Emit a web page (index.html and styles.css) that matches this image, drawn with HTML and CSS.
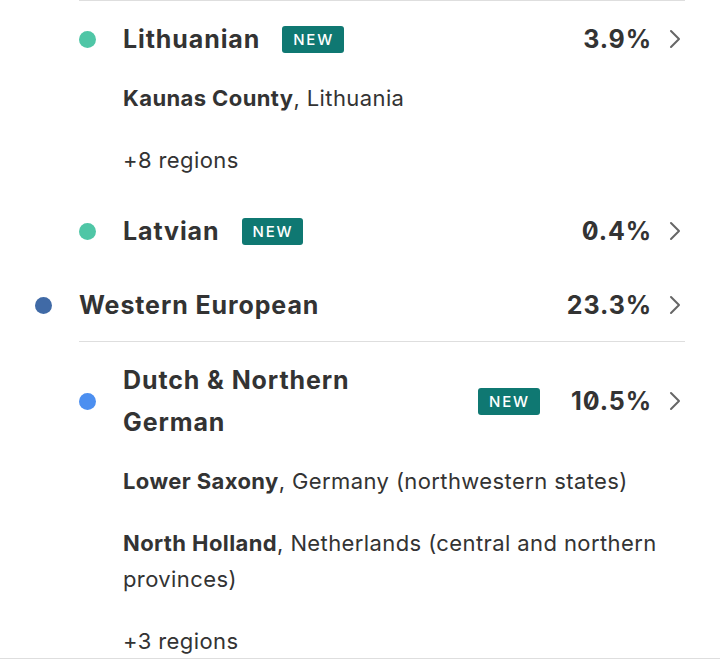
FILE: index.html
```html
<!DOCTYPE html>
<html lang="en">
<head>
<meta charset="utf-8">
<link rel="stylesheet" href="styles.css">
</head>
<body>
<div class="page">
  <ul class="list">
    <li class="row sub divided">
      <div class="head">
        <span class="dot dot-lt"></span>
        <div class="name-wrap">
          <span class="name">Lithuanian</span>
          <span class="badge">NEW</span>
        </div>
        <span class="pct">3.9%</span>
        <svg class="chev" viewBox="0 0 12 20" width="12" height="20"><path d="M2 2 L10 10 L2 18" fill="none" stroke="#666666" stroke-width="2" stroke-linecap="round" stroke-linejoin="round"/></svg>
      </div>
      <div class="regions">
        <p class="region"><b>Kaunas County</b>, Lithuania</p>
        <p class="region">+8 regions</p>
      </div>
    </li>
    <li class="row sub">
      <div class="head">
        <span class="dot dot-lt"></span>
        <div class="name-wrap">
          <span class="name">Latvian</span>
          <span class="badge">NEW</span>
        </div>
        <span class="pct">0.4%</span>
        <svg class="chev" viewBox="0 0 12 20" width="12" height="20"><path d="M2 2 L10 10 L2 18" fill="none" stroke="#666666" stroke-width="2" stroke-linecap="round" stroke-linejoin="round"/></svg>
      </div>
    </li>
    <li class="row top">
      <div class="head">
        <span class="dot dot-we"></span>
        <div class="name-wrap">
          <span class="name">Western European</span>
        </div>
        <span class="pct">23.3%</span>
        <svg class="chev" viewBox="0 0 12 20" width="12" height="20"><path d="M2 2 L10 10 L2 18" fill="none" stroke="#666666" stroke-width="2" stroke-linecap="round" stroke-linejoin="round"/></svg>
      </div>
    </li>
    <li class="row sub divided">
      <div class="head">
        <span class="dot dot-dn"></span>
        <div class="name-wrap">
          <span class="name">Dutch &amp; Northern German</span>
          <span class="badge">NEW</span>
        </div>
        <span class="pct">10.5%</span>
        <svg class="chev" viewBox="0 0 12 20" width="12" height="20"><path d="M2 2 L10 10 L2 18" fill="none" stroke="#666666" stroke-width="2" stroke-linecap="round" stroke-linejoin="round"/></svg>
      </div>
      <div class="regions">
        <p class="region"><b>Lower Saxony</b>, Germany (northwestern states)</p>
        <p class="region"><b>North Holland</b>, Netherlands (central and northern provinces)</p>
        <p class="region">+3 regions</p>
      </div>
    </li>
  </ul>
</div>
</body>
</html>
```
FILE: styles.css
```css
* { box-sizing: border-box; }
html, body { margin: 0; padding: 0; background: #fff; }
body {
  font-family: Inter, "Noto Sans", sans-serif;
  color: #333333;
}
.page {
  height: 659px;
  overflow: hidden;
  border-bottom: 1px solid #dedede;
}
.list {
  list-style: none;
  margin: 0;
  padding: 0 35px;
  width: 720px;
}
.row {
  padding: 17px 0 15px 0;
}
.row.sub { margin-left: 44px; }
.row.divided { border-top: 1px solid #dedede; }
.head {
  display: flex;
  align-items: center;
}
.dot {
  flex: none;
  width: 17px;
  height: 17px;
  border-radius: 50%;
  margin-right: 27px;
}
.dot-lt { background: #4fc6a6; }
.dot-we { background: #406aa6; }
.dot-dn { background: #4c8ff0; }
.name-wrap {
  flex: 1;
  min-width: 0;
  display: flex;
  align-items: center;
  gap: 22px;
  margin-right: 26px;
}
.name {
  flex: 0 1 auto;
  max-width: 333px;
  font-size: 25px;
  font-weight: 700;
  letter-spacing: 0.9px;
  line-height: 42px;
}
.badge {
  flex: none;
  background: #0f7872;
  color: #fff;
  font-size: 15px;
  font-weight: 500;
  letter-spacing: 1.8px;
  line-height: 27px;
  height: 27px;
  padding: 0 10px 0 11px;
  border-radius: 3px;
}
.pct {
  flex: none;
  font-size: 25px;
  font-weight: 700;
  letter-spacing: 0.9px;
  line-height: 42px;
  font-feature-settings: "zero" 1;
  text-align: right;
}
.chev {
  flex: none;
  margin-left: 17px;
  margin-right: 4px;
}
.regions {
  padding-left: 44px;
}
.region {
  margin: 0;
  font-size: 22px;
  letter-spacing: 0.4px;
  line-height: 36px;
  color: #333333;
}
.region:first-child { margin-top: 20px; }
.region + .region { margin-top: 26px; }
.region b { font-weight: 700; }
```
